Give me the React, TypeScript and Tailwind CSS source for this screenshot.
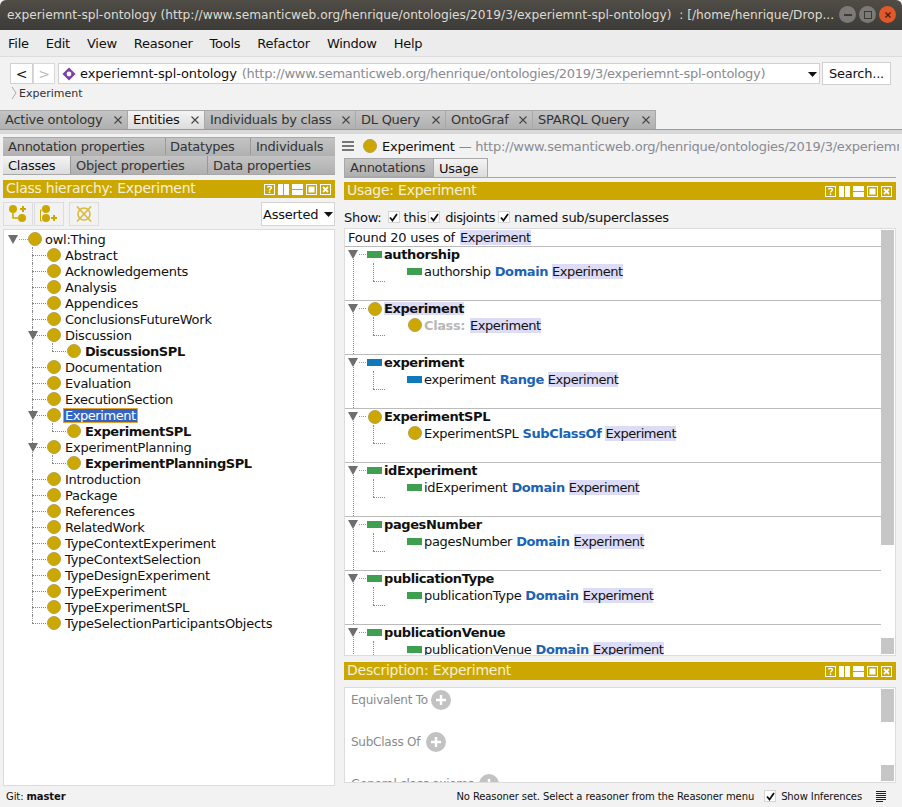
import React from 'react';

const GOLD = '#cca700';

const Dot = ({ className = '' }: { className?: string }) => (
  <span className={`inline-block w-[14px] h-[14px] shrink-0 rounded-full bg-[#cca700] border border-[#b8a050] ${className}`} />
);

const Arrow = ({ className = '' }: { className?: string }) => (
  <svg width="10" height="9" viewBox="0 0 10 9" className={className}>
    <path d="M0 0H10L5 9Z" fill="#6e6e6e" />
  </svg>
);

const Check = ({ size = 12 }: { size?: number }) => (
  <span className="inline-flex items-center justify-center bg-white border border-[#d4d4d4] shrink-0" style={{ width: size, height: size }}>
    <svg width="9" height="9" viewBox="0 0 9 9">
      <path d="M1 4.5L3.5 7.5L8 1" fill="none" stroke="#111" strokeWidth="1.8" />
    </svg>
  </span>
);

const TabClose = () => (
  <svg width="8" height="8" viewBox="0 0 8 8" className="shrink-0">
    <path d="M.5 .5L7.5 7.5M7.5 .5L.5 7.5" stroke="#444" strokeWidth="1.1" />
  </svg>
);

// Little window buttons in the gold view bars
const ViewButtons = () => (
  <div className="flex gap-[3px] ml-auto mr-[4px]">
    <svg width="11" height="11" viewBox="0 0 11 11">
      <rect x=".5" y=".5" width="10" height="10" fill="none" stroke="#fff" />
      <path d="M3.5 3.5C3.5 2 7.5 2 7.5 3.5C7.5 5 5.5 5 5.5 6.5M5.5 7.5V9" fill="none" stroke="#fff" strokeWidth="1.4" />
    </svg>
    <svg width="11" height="11" viewBox="0 0 11 11">
      <rect x=".5" y=".5" width="10" height="10" fill="#fff" stroke="#fff" />
      <rect x="5" y="0" width="1" height="11" fill={GOLD} />
    </svg>
    <svg width="11" height="11" viewBox="0 0 11 11">
      <rect x=".5" y=".5" width="10" height="10" fill="#fff" stroke="#fff" />
      <rect x="0" y="5" width="11" height="1" fill={GOLD} />
    </svg>
    <svg width="11" height="11" viewBox="0 0 11 11">
      <rect x=".5" y=".5" width="10" height="10" fill="none" stroke="#fff" />
      <rect x="2.5" y="2.5" width="6" height="6" fill="#fff" />
    </svg>
    <svg width="11" height="11" viewBox="0 0 11 11">
      <rect x=".5" y=".5" width="10" height="10" fill="none" stroke="#fff" />
      <path d="M3 3L8 8M8 3L3 8" stroke="#fff" strokeWidth="1.8" />
    </svg>
  </div>
);

const GoldBar = ({ title }: { title: string }) => (
  <div className="h-[18px] bg-[#cca700] flex items-center pl-[3px] text-[14px] text-[#f6f0d8] shrink-0">
    <span className="pb-[3px]">{title}</span>
    <ViewButtons />
  </div>
);

const mainTabs = [
  { label: 'Active ontology', w: 'w-[128px]' },
  { label: 'Entities', w: 'w-[77px]', active: true },
  { label: 'Individuals by class', w: 'w-[151px]' },
  { label: 'DL Query', w: 'w-[90px]' },
  { label: 'OntoGraf', w: 'w-[87px]' },
  { label: 'SPARQL Query', w: 'w-[123px]' },
];

const tree: { label: string; level: number; open?: boolean; bold?: boolean; selected?: boolean }[] = [
  { label: 'Abstract', level: 1 },
  { label: 'Acknowledgements', level: 1 },
  { label: 'Analysis', level: 1 },
  { label: 'Appendices', level: 1 },
  { label: 'ConclusionsFutureWork', level: 1 },
  { label: 'Discussion', level: 1, open: true },
  { label: 'DiscussionSPL', level: 2, bold: true },
  { label: 'Documentation', level: 1 },
  { label: 'Evaluation', level: 1 },
  { label: 'ExecutionSection', level: 1 },
  { label: 'Experiment', level: 1, open: true, selected: true },
  { label: 'ExperimentSPL', level: 2, bold: true },
  { label: 'ExperimentPlanning', level: 1, open: true },
  { label: 'ExperimentPlanningSPL', level: 2, bold: true },
  { label: 'Introduction', level: 1 },
  { label: 'Package', level: 1 },
  { label: 'References', level: 1 },
  { label: 'RelatedWork', level: 1 },
  { label: 'TypeContextExperiment', level: 1 },
  { label: 'TypeContextSelection', level: 1 },
  { label: 'TypeDesignExperiment', level: 1 },
  { label: 'TypeExperiment', level: 1 },
  { label: 'TypeExperimentSPL', level: 1 },
  { label: 'TypeSelectionParticipantsObjects', level: 1 },
];

type Kind = 'data' | 'object' | 'class';

const usages: { name: string; kind: Kind; item: string; keyword: string; highlight?: boolean }[] = [
  { name: 'authorship', kind: 'data', item: 'authorship', keyword: 'Domain' },
  { name: 'Experiment', kind: 'class', item: '', keyword: 'Class:', highlight: true },
  { name: 'experiment', kind: 'object', item: 'experiment', keyword: 'Range' },
  { name: 'ExperimentSPL', kind: 'class', item: 'ExperimentSPL', keyword: 'SubClassOf' },
  { name: 'idExperiment', kind: 'data', item: 'idExperiment', keyword: 'Domain' },
  { name: 'pagesNumber', kind: 'data', item: 'pagesNumber', keyword: 'Domain' },
  { name: 'publicationType', kind: 'data', item: 'publicationType', keyword: 'Domain' },
  { name: 'publicationVenue', kind: 'data', item: 'publicationVenue', keyword: 'Domain' },
];

const KindIcon = ({ kind }: { kind: Kind }) => {
  if (kind === 'class') return <Dot />;
  return <span className={`inline-block w-[15px] h-[7px] shrink-0 ${kind === 'data' ? 'bg-[#3f9f50]' : 'bg-[#0f79ba]'}`} />;
};

const Hl = ({ children }: { children: React.ReactNode }) => (
  <span className="bg-[#dcdcf6] tracking-[-0.45px]">{children}</span>
);

const PlusCircle = () => (
  <span className="inline-flex w-5 h-5 rounded-full bg-[#c2c2c2] items-center justify-center shrink-0">
    <svg width="12" height="12" viewBox="0 0 12 12">
      <path d="M6 1V11M1 6H11" stroke="#fff" strokeWidth="2.4" />
    </svg>
  </span>
);

export default function App() {
  return (
    <div className="w-[902px] h-[807px] overflow-hidden bg-[#f2f2f2] text-[13px] tracking-[-0.25px] text-[#111] font-['DejaVu_Sans',sans-serif] flex flex-col leading-none">
      {/* Title bar */}
      <div className="h-[30px] shrink-0 rounded-t-[6px] bg-gradient-to-b from-[#504d47] to-[#3c3b37] flex items-center pl-[7px] text-[12.2px] tracking-normal text-[#dfdbd2] whitespace-pre relative">
        <span>experiemnt-spl-ontology (http://www.semanticweb.org/henrique/ontologies/2019/3/experiemnt-spl-ontology)  : [/home/henrique/Drop...</span>
        <div className="absolute right-[6px] top-[6px] flex gap-[3px]">
          <span className="w-[17px] h-[17px] rounded-full bg-[#7b7a74] flex items-center justify-center">
            <span className="w-2 h-[2px] bg-[#3c3b37]" />
          </span>
          <span className="w-[17px] h-[17px] rounded-full bg-[#7b7a74] flex items-center justify-center">
            <span className="w-2 h-2 border border-[#3c3b37]" />
          </span>
          <span className="w-[17px] h-[17px] rounded-full bg-[#e0592a] flex items-center justify-center">
            <svg width="8" height="8" viewBox="0 0 8 8">
              <path d="M1.5 1.5L6.5 6.5M6.5 1.5L1.5 6.5" stroke="#4a2010" strokeWidth="1.4" />
            </svg>
          </span>
        </div>
      </div>

      {/* Menu bar */}
      <div className="h-[27px] shrink-0 bg-[#ececec] border-b border-[#dcdcdc] flex items-center pl-[8px] gap-[17px]">
        {['File', 'Edit', 'View', 'Reasoner', 'Tools', 'Refactor', 'Window', 'Help'].map((m) => (
          <span key={m}>{m}</span>
        ))}
      </div>

      {/* Nav toolbar */}
      <div className="h-[21px] mt-[6px] shrink-0 flex pl-[10px]">
        <div className="w-[23px] bg-white border border-[#d0d0d0] flex items-center justify-center text-[14px]">&lt;</div>
        <div className="w-[22px] bg-white border border-[#d8d8d8] flex items-center justify-center text-[14px] text-[#bbb]">&gt;</div>
        <div className="w-[762px] ml-[3px] bg-white border border-[#d0d0d0] flex items-center pl-[3px] whitespace-nowrap relative">
          <svg width="14" height="14" viewBox="0 0 14 14" className="shrink-0">
            <path d="M7 .5L13.5 7L7 13.5L.5 7Z" fill="#7b3fa8" />
            <circle cx="7" cy="7" r="2.4" fill="#fff" />
          </svg>
          <span className="ml-[4px] tracking-[-0.13px]">experiemnt-spl-ontology</span>
          <span className="ml-[5px] text-[#8a8a92] tracking-[-0.27px]">(http://www.semanticweb.org/henrique/ontologies/2019/3/experiemnt-spl-ontology)</span>
          <svg width="9" height="5" viewBox="0 0 9 5" className="absolute right-[2px] top-[8px]">
            <path d="M0 0H9L4.5 5Z" fill="#111" />
          </svg>
        </div>
        <div className="w-[69px] ml-[2px] -mt-[1px] h-[23px] bg-white border border-[#d0d0d0] flex items-center justify-center">Search...</div>
      </div>

      {/* Breadcrumb */}
      <div className="h-[16px] shrink-0 flex items-center pl-[11px] text-[11px] tracking-normal text-[#333] mt-[1px]">
        <svg width="6" height="14" viewBox="0 0 6 14" className="mr-[2px]">
          <path d="M1 1L5 7L1 13" fill="none" stroke="#aaa" />
        </svg>
        Experiment
      </div>

      {/* Main tabs */}
      <div className="h-[20px] mt-[9px] shrink-0 flex border-b border-[#999]">
        {mainTabs.map((t) => (
          <div
            key={t.label}
            className={`${t.w} h-[19px] flex items-center justify-between pl-[5px] pr-[5px] pb-[1px] border-r border-t border-[#a8a8a8] ${
              t.active ? 'bg-gradient-to-b from-[#f4f4f4] to-[#dcdcdc] text-[#111]' : 'bg-gradient-to-b from-[#c4c4c4] to-[#b0b0b0] text-[#333]'
            }`}
          >
            <span>{t.label}</span>
            <TabClose />
          </div>
        ))}
      </div>
      <div className="h-[4px] shrink-0 bg-[#d8d8d8]" />

      {/* Workspace */}
      <div className="flex-1 flex min-h-0 pl-[3px] pt-[3px]">
        {/* Left column */}
        <div className="w-[332px] shrink-0 flex flex-col">
          <div className="flex h-[19px] pb-[1px] shrink-0 bg-gradient-to-b from-[#c4c4c4] to-[#b0b0b0] text-[#333] border-t border-[#a8a8a8]">
            <div className="w-[163px] pl-[5px] flex items-center border-r border-[#999]">Annotation properties</div>
            <div className="w-[85px] pl-[4px] flex items-center border-r border-[#999]">Datatypes</div>
            <div className="flex-1 pl-[5px] flex items-center">Individuals</div>
          </div>
          <div className="flex h-[19px] shrink-0 text-[#333] border-b border-[#a8a8a8]">
            <div className="w-[68px] pl-[5px] flex items-center bg-gradient-to-b from-[#f4f4f4] to-[#dcdcdc] text-[#111] border-r border-[#999]">Classes</div>
            <div className="w-[137px] pl-[5px] flex items-center bg-gradient-to-b from-[#c4c4c4] to-[#b0b0b0] border-r border-[#999]">Object properties</div>
            <div className="flex-1 pl-[5px] flex items-center bg-gradient-to-b from-[#c4c4c4] to-[#b0b0b0]">Data properties</div>
          </div>
          <div className="mt-[5px]">
            <GoldBar title="Class hierarchy: Experiment" />
          </div>
          <div className="h-[24px] mt-[4px] shrink-0 flex">
            <div className="w-[30px] border border-[#dcdcdc] flex items-center justify-center">
              <svg width="18" height="18" viewBox="0 0 18 18">
                <circle cx="4" cy="4" r="4" fill={GOLD} />
                <circle cx="13" cy="13" r="4" fill={GOLD} />
                <path d="M4 8V13H9" fill="none" stroke={GOLD} strokeWidth="1.5" />
                <path d="M14 1V7M11 4H17" stroke={GOLD} strokeWidth="2" />
              </svg>
            </div>
            <div className="w-[30px] ml-[1px] border border-[#dcdcdc] flex items-center justify-center">
              <svg width="18" height="18" viewBox="0 0 18 18">
                <circle cx="6" cy="4" r="4" fill={GOLD} />
                <circle cx="6" cy="13" r="4" fill={GOLD} />
                <path d="M2 5H.5V16H2" fill="none" stroke={GOLD} strokeWidth="1" />
                <path d="M14 10V16M11 13H17" stroke={GOLD} strokeWidth="2" />
              </svg>
            </div>
            <div className="w-[30px] ml-[5px] border border-[#dcdcdc] flex items-center justify-center">
              <svg width="18" height="18" viewBox="0 0 18 18">
                <circle cx="9" cy="9" r="6" fill="none" stroke="#d6ba40" strokeWidth="1.6" />
                <path d="M2 1.5L16 16.5M16 1.5L2 16.5" stroke="#d6ba40" strokeWidth="1.6" />
              </svg>
            </div>
            <div className="ml-auto w-[74px] bg-white border border-[#d4d4d4] flex items-center pl-[1px] relative">
              Asserted
              <svg width="9" height="5" viewBox="0 0 9 5" className="absolute right-[1px] top-[9px]">
                <path d="M0 0H9L4.5 5Z" fill="#111" />
              </svg>
            </div>
          </div>

          {/* Class tree */}
          <div className="h-[557px] mt-[3px] shrink-0 bg-white border border-[#dcdcdc] pt-[1px] relative overflow-hidden">
            <div className="h-4 flex items-center pl-[4px]">
              <Arrow />
              <span className="w-[9px] ml-[1px] border-t border-dotted border-[#999]" />
              <Dot />
              <span className="ml-[3px]">owl:Thing</span>
            </div>
            {tree.map((n, i) => (
              <div key={n.label} className="h-4 flex items-center relative">
                {/* dotted trunk */}
                <span className={`absolute left-[28px] top-0 border-l border-dotted border-[#888] ${i === tree.length - 1 ? 'h-2' : 'h-4'}`} />
                {n.level === 2 ? (
                  <>
                    <span className="absolute left-[48px] top-0 h-2 border-l border-dotted border-[#888]" />
                    <span className="absolute left-[48px] top-2 w-[14px] border-t border-dotted border-[#888]" />
                    <Dot className="ml-[63px]" />
                    <span className={`ml-[4px] ${n.bold ? 'font-bold tracking-[-0.42px]' : ''}`}>{n.label}</span>
                  </>
                ) : (
                  <>
                    <span className="absolute left-[28px] top-2 w-[14px] border-t border-dotted border-[#888]" />
                    {n.open && <Arrow className="absolute left-[24px] top-[4px]" />}
                    <Dot className="ml-[43px]" />
                    <span className={`ml-[3px] px-[1px] ${n.selected ? 'bg-[#3465c0] text-white tracking-[-0.45px] outline outline-1 outline-[#e8a030]' : ''}`}>{n.label}</span>
                  </>
                )}
              </div>
            ))}
          </div>
        </div>

        {/* Right column */}
        <div className="flex-1 ml-[9px] mr-[6px] flex flex-col min-w-0">
          <div className="h-[18px] shrink-0 flex items-center whitespace-nowrap overflow-hidden -ml-[2px] -mr-[3px]">
            <svg width="12" height="10" viewBox="0 0 12 10" className="shrink-0">
              <path d="M0 1H12M0 5H12M0 9H12" stroke="#777" strokeWidth="2" />
            </svg>
            <Dot className="ml-[9px]" />
            <span className="ml-[5px]">Experiment</span>
            <span className="ml-[4px] text-[#8a8a92]">— http://www.semanticweb.org/henrique/ontologies/2019/3/experiemnt-spl-ontology</span>
          </div>
          <div className="h-[20px] mt-[3px] shrink-0 flex border-b border-[#a8a8a8]">
            <div className="w-[90px] pl-[5px] flex items-center bg-gradient-to-b from-[#c4c4c4] to-[#b0b0b0] text-[#333] border border-[#a8a8a8]">Annotations</div>
            <div className="w-[54px] pl-[5px] flex items-center bg-gradient-to-b from-[#f4f4f4] to-[#dcdcdc] border-r border-t border-[#a8a8a8]">Usage</div>
          </div>
          <div className="mt-[4px]">
            <GoldBar title="Usage: Experiment" />
          </div>
          <div className="h-[18px] mt-[8px] shrink-0 flex items-center whitespace-nowrap">
            <span>Show:</span>
            <span className="ml-[6px]"><Check /></span>
            <span className="ml-[4px]">this</span>
            <span className="ml-[2px]"><Check /></span>
            <span className="ml-[5px] tracking-[-0.45px]">disjoints</span>
            <span className="ml-[3px]"><Check /></span>
            <span className="ml-[4px]">named sub/superclasses</span>
          </div>

          {/* Usage list */}
          <div className="h-[428px] mt-[2px] shrink-0 bg-white border border-[#dcdcdc] flex overflow-hidden">
            <div className="flex-1 min-w-0 overflow-hidden">
              <div className="h-[18px] pl-[3px] flex items-center border-b border-[#bbb]">
                <span>Found 20 uses of</span>
                <span className="ml-[5px]"><Hl>Experiment</Hl></span>
              </div>
              {usages.map((u) => (
                <div key={u.name} className="h-[54px] shrink-0 border-b border-[#bbb] relative">
                  <span className="absolute left-[8px] top-[10px] h-[43px] border-l border-dotted border-[#888]" />
                  <span className="absolute left-[28px] top-[16px] h-[18px] border-l border-dotted border-[#888]" />
                  <span className="absolute left-[28px] top-[34px] w-[12px] border-t border-dotted border-[#888]" />
                  <div className="h-[15px] flex items-center pl-[3px]">
                    <Arrow />
                    <span className="w-[7px] ml-[1px] mr-[1px] border-t border-dotted border-[#999]" />
                    <span className="w-[15px] flex justify-center"><KindIcon kind={u.kind} /></span>
                    <span className={`ml-[2px] font-bold tracking-[-0.4px] ${u.highlight ? 'bg-[#dcdcf6]' : ''}`}>{u.name}</span>
                  </div>
                  <div className="h-4 mt-[1px] flex items-center pl-[62px]">
                    <span className="w-[15px] flex justify-center"><KindIcon kind={u.kind} /></span>
                    {u.highlight ? (
                      <>
                        <span className="ml-[2px] font-bold tracking-[-0.4px] text-[#b8b8b8]">{u.keyword}</span>
                        <span className="ml-[5px]"><Hl>Experiment</Hl></span>
                      </>
                    ) : (
                      <>
                        <span className="ml-[2px] tracking-[-0.3px]">{u.item}</span>
                        <span className="ml-[4px] font-bold tracking-[-0.4px] text-[#1b63b5]">{u.keyword}</span>
                        <span className="ml-[4px]"><Hl>Experiment</Hl></span>
                      </>
                    )}
                  </div>
                </div>
              ))}
            </div>
            <div className="w-[13px] shrink-0 flex flex-col justify-between pt-[1px] pb-[1px] mr-[1px]">
              <div className="h-[315px] bg-[#c6c6c6]" />
              <div className="h-[16px] bg-[#c6c6c6]" />
            </div>
          </div>

          <div className="mt-[6px]">
            <GoldBar title="Description: Experiment" />
          </div>

          {/* Description */}
          <div className="h-[96px] mt-[7px] shrink-0 bg-white border border-[#dcdcdc] flex overflow-hidden text-[12px] text-[#8a8a8a]">
            <div className="flex-1 min-w-0 pl-[6px] pt-[2px]">
              <div className="h-5 flex items-center gap-[3px]">Equivalent To <PlusCircle /></div>
              <div className="h-5 mt-[22px] flex items-center gap-[6px]">SubClass Of <PlusCircle /></div>
              <div className="h-5 mt-[22px] flex items-center gap-[5px]">General class axioms <PlusCircle /></div>
            </div>
            <div className="w-[13px] shrink-0 flex flex-col justify-between py-[1px] mr-[1px]">
              <div className="h-[33px] bg-[#c6c6c6]" />
              <div className="h-[16px] bg-[#c6c6c6]" />
            </div>
          </div>
        </div>
      </div>

      {/* Status bar */}
      <div className="h-[21px] shrink-0 flex items-center pl-[6px] text-[10px] tracking-[-0.1px] text-[#111] whitespace-nowrap">
        <span>Git: <b>master</b></span>
        <span className="ml-auto">No Reasoner set. Select a reasoner from the Reasoner menu</span>
        <span className="ml-[10px]"><Check size={12} /></span>
        <span className="ml-[5px]">Show Inferences</span>
        <svg width="10" height="11" viewBox="0 0 10 11" className="ml-[14px] mr-[16px]">
          <path d="M0 .5H10M0 2.5H10M0 4.5H10M0 6.5H10M0 8.5H10M0 10.5H7" stroke="#222" />
        </svg>
      </div>
    </div>
  );
}
